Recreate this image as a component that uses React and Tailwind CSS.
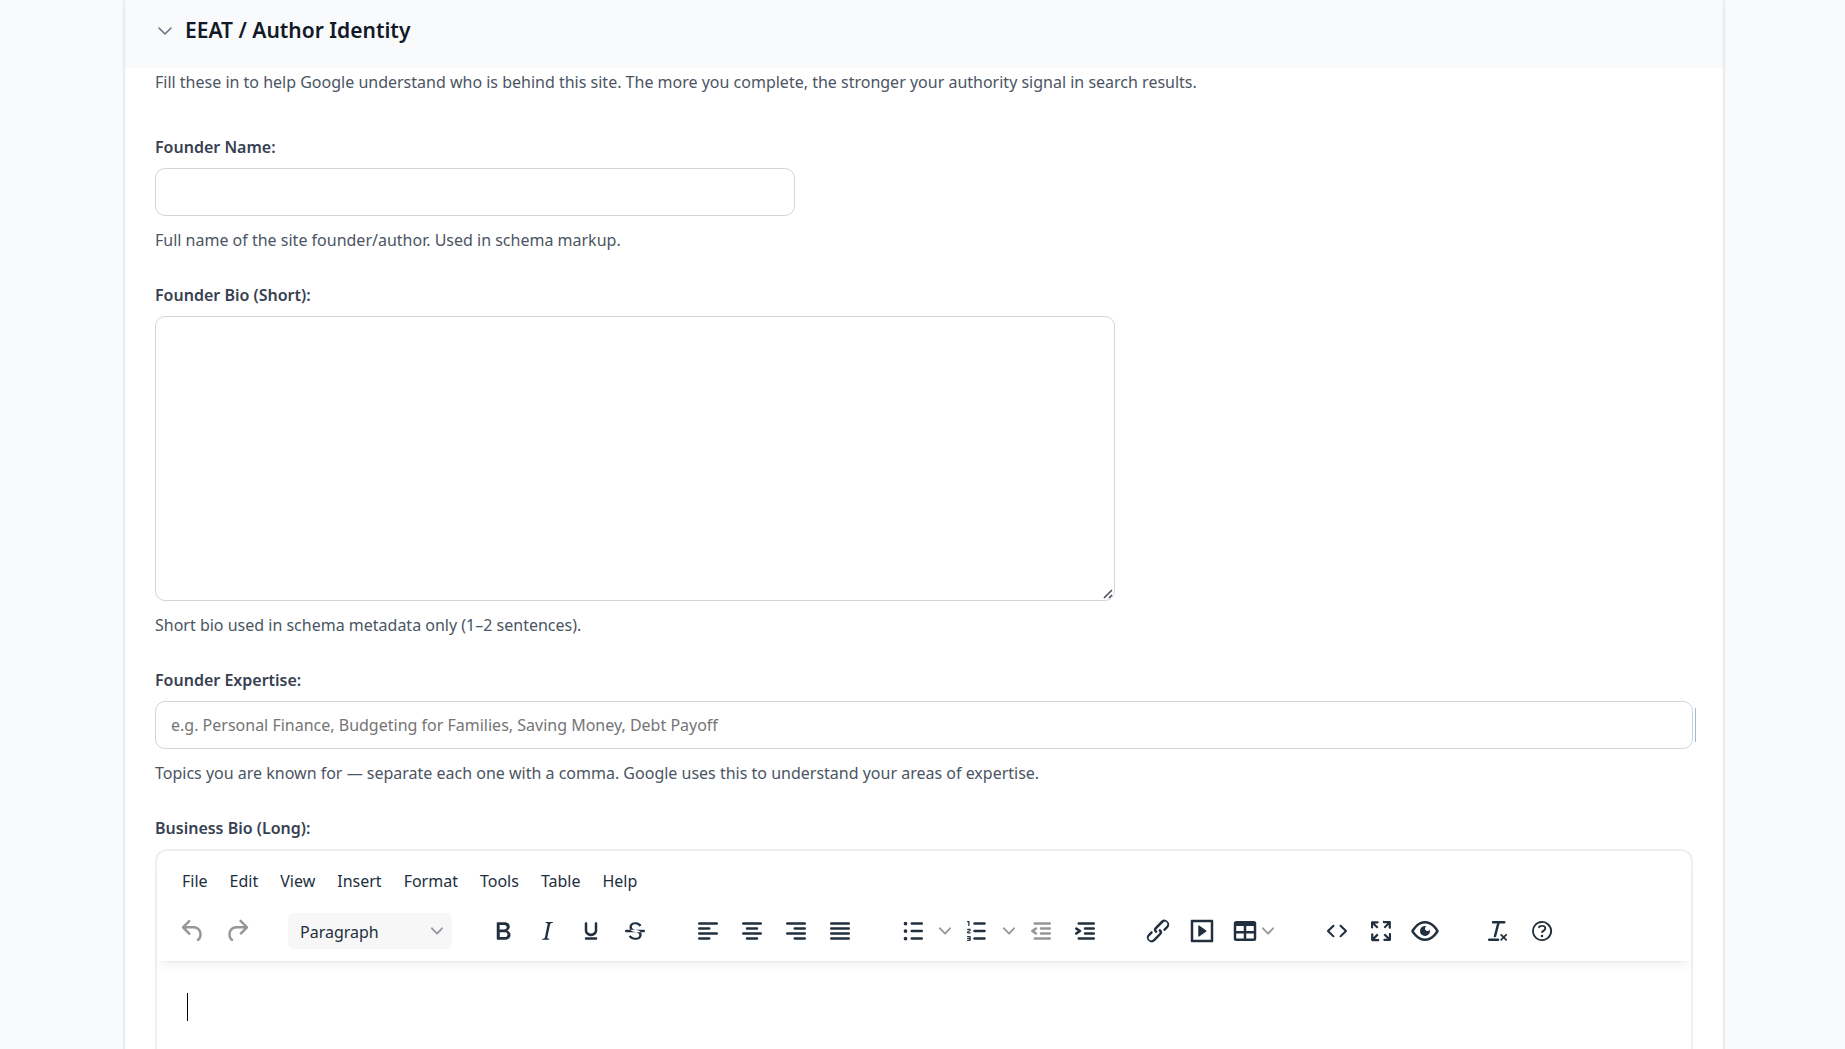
import { useState } from "react";

const icons = {
  undo: "M6.4 8H12c3.7 0 6.2 2 6.8 5.1.6 2.7-.4 5.6-2.3 6.8a1 1 0 01-1-1.8c1.1-.6 1.8-2.7 1.4-4.6-.5-2.1-2.1-3.5-4.9-3.5H6.4l3.3 3.3a1 1 0 11-1.4 1.4l-5-5a1 1 0 010-1.4l5-5a1 1 0 011.4 1.4L6.4 8z",
  redo: "M17.6 10H12c-2.8 0-4.4 1.4-4.9 3.5-.4 2 .3 4 1.4 4.6a1 1 0 11-1 1.8c-2-1.2-2.9-4.1-2.3-6.8.6-3 3-5.1 6.8-5.1h5.6l-3.3-3.3a1 1 0 111.4-1.4l5 5a1 1 0 010 1.4l-5 5a1 1 0 01-1.4-1.4l3.3-3.3z",
  bold: "M7.8 19c-.3 0-.5 0-.6-.2l-.2-.5V5.7c0-.2 0-.4.2-.5l.6-.2h5c1.5 0 2.7.3 3.5 1 .7.6 1.1 1.4 1.1 2.5a3 3 0 01-.6 1.9c-.4.6-1 1-1.6 1.2.4.1.9.3 1.3.6s.8.7 1 1.2c.4.4.5 1 .5 1.6 0 1.3-.4 2.3-1.3 3-.8.7-2.1 1-3.8 1H7.8zm5-8.3c.6 0 1.2-.1 1.6-.5.4-.3.6-.7.6-1.3 0-1.1-.8-1.7-2.3-1.7H9.3v3.5h3.4zm.5 6c.7 0 1.3-.1 1.7-.4.4-.4.6-.9.6-1.5s-.2-1-.7-1.4c-.4-.3-1-.4-2-.4H9.4v3.8h4z",
  italic: "M16.7 4.7l-.1.9h-.3c-.6 0-1 0-1.4.3-.3.3-.4.6-.5 1.1l-2.1 9.8v.6c0 .5.4.8 1.4.8h.2l-.2.8H8l.2-.8h.2c1.1 0 1.8-.5 2-1.5l2-9.8.1-.5c0-.6-.4-.8-1.4-.8h-.3l.2-.9h5.8z",
  underline: "M16 5c.6 0 1 .4 1 1v5.5a4 4 0 01-.4 1.8l-1 1.4a5.3 5.3 0 01-5.5 1 5 5 0 01-1.6-1c-.5-.4-.8-.9-1.1-1.4a4 4 0 01-.4-1.8V6c0-.6.4-1 1-1s1 .4 1 1v5.5c0 .3 0 .6.2 1l.6.7a3.3 3.3 0 002.2.8 3.4 3.4 0 002.2-.8c.3-.2.4-.5.6-.8l.2-.9V6c0-.6.4-1 1-1zM8 17h8c.6 0 1 .4 1 1s-.4 1-1 1H8a1 1 0 010-2z",
  strike: "M15.6 8.5c-.5-.7-1-1.1-1.3-1.3-.6-.4-1.3-.6-2-.6-2.7 0-2.8 1.7-2.8 2.1 0 1.6 1.8 2 3.2 2.3 4.4.9 4.6 2.8 4.6 3.9 0 1.4-.7 4.1-5 4.1A6.2 6.2 0 017 16.4l1.5-1.1c.4.6 1.6 2 3.7 2 1.6 0 2.5-.4 3-1.2.4-.8.3-2-.8-2.6-.7-.4-1.6-.7-2.9-1-1-.2-3.9-.8-3.9-3.6C7.6 6 10.3 5 12.4 5c2.9 0 4.2 1.6 4.7 2.4l-1.5 1.1zM5 11h14a1 1 0 010 2H5a1 1 0 010-2z",
  alignLeft: "M5 5h14a1 1 0 010 2H5a1 1 0 110-2zm0 4h8a1 1 0 010 2H5a1 1 0 110-2zm0 4h14a1 1 0 010 2H5a1 1 0 010-2zm0 4h8a1 1 0 010 2H5a1 1 0 010-2z",
  alignCenter: "M5 5h14a1 1 0 010 2H5a1 1 0 110-2zm3 4h8a1 1 0 010 2H8a1 1 0 110-2zm-3 4h14a1 1 0 010 2H5a1 1 0 010-2zm3 4h8a1 1 0 010 2H8a1 1 0 010-2z",
  alignRight: "M5 5h14a1 1 0 010 2H5a1 1 0 110-2zm6 4h8a1 1 0 010 2h-8a1 1 0 010-2zm-6 4h14a1 1 0 010 2H5a1 1 0 010-2zm6 4h8a1 1 0 010 2h-8a1 1 0 010-2z",
  alignJustify: "M5 5h14a1 1 0 010 2H5a1 1 0 110-2zm0 4h14a1 1 0 010 2H5a1 1 0 110-2zm0 4h14a1 1 0 010 2H5a1 1 0 010-2zm0 4h14a1 1 0 010 2H5a1 1 0 010-2z",
  bullets: "M11 5h8a1 1 0 010 2h-8a1 1 0 010-2zm0 6h8a1 1 0 010 2h-8a1 1 0 010-2zm0 6h8a1 1 0 010 2h-8a1 1 0 010-2zM6 4.5a1.5 1.5 0 110 3 1.5 1.5 0 010-3zm0 6a1.5 1.5 0 110 3 1.5 1.5 0 010-3zm0 6a1.5 1.5 0 110 3 1.5 1.5 0 010-3z",
  numbers: "M10 17h8a1 1 0 010 2h-8a1 1 0 010-2zm0-6h8a1 1 0 010 2h-8a1 1 0 010-2zm0-6h8a1 1 0 010 2h-8a1 1 0 110-2zM6 4v3.5c0 .3-.2.5-.5.5a.5.5 0 01-.5-.5V5h-.5a.5.5 0 010-1H6zm-1 8.8l.2.2h1.3c.3 0 .5.2.5.5s-.2.5-.5.5H4.9a1 1 0 01-.9-1V13c0-.4.3-.8.6-1l1.2-.4.2-.3a.2.2 0 00-.2-.2H4.5a.5.5 0 01-.5-.5c0-.3.2-.5.5-.5h1.6c.5 0 .9.4.9 1v.1c0 .4-.3.8-.6 1l-1.2.4-.2.3zM7 17v2c0 .6-.4 1-1 1H4.5a.5.5 0 010-1h1.2c.2 0 .3-.1.3-.3 0-.2-.1-.3-.3-.3H4.4a.4.4 0 110-.8h1.3c.2 0 .3-.1.3-.3 0-.2-.1-.3-.3-.3H4.5a.5.5 0 110-1H6c.6 0 1 .4 1 1z",
  outdent: "M7 5h12a1 1 0 010 2H7a1 1 0 110-2zm5 4h7a1 1 0 010 2h-7a1 1 0 010-2zm0 4h7a1 1 0 010 2h-7a1 1 0 010-2zm-5 4h12a1 1 0 010 2H7a1 1 0 010-2zm1.6-3.8a1 1 0 01-1.2 1.6l-3-2a1 1 0 010-1.6l3-2a1 1 0 011.2 1.6L6.8 12l1.8 1.2z",
  indent: "M7 5h12a1 1 0 010 2H7a1 1 0 110-2zm5 4h7a1 1 0 010 2h-7a1 1 0 010-2zm0 4h7a1 1 0 010 2h-7a1 1 0 010-2zm-5 4h12a1 1 0 010 2H7a1 1 0 010-2zm-2.6-3.8L6.2 12l-1.8-1.2a1 1 0 011.2-1.6l3 2a1 1 0 010 1.6l-3 2a1 1 0 11-1.2-1.6z",
  link: "M6.2 12.3a1 1 0 011.4 1.4l-2 2a2 2 0 102.6 2.8l4.8-4.8a1 1 0 000-1.4 1 1 0 111.4-1.3 2.9 2.9 0 010 4L9.6 20a3.9 3.9 0 01-5.5-5.5l2-2zm11.6-.6a1 1 0 01-1.4-1.4l2-2a2 2 0 10-2.6-2.8L11 10.3a1 1 0 000 1.4A1 1 0 119.6 13a2.9 2.9 0 010-4L14.4 4a3.9 3.9 0 015.5 5.5l-2 2z",
  media: "M4 3h16c.6 0 1 .4 1 1v16c0 .6-.4 1-1 1H4a1 1 0 01-1-1V4c0-.6.4-1 1-1zm1 2v14h14V5H5zm4.8 2.6l5.6 4a.5.5 0 010 .8l-5.6 4A.5.5 0 019 16V8a.5.5 0 01.8-.4z",
  table: "M19 4a2 2 0 012 2v12a2 2 0 01-2 2H5a2 2 0 01-2-2V6c0-1.1.9-2 2-2h14zM5 14v4h6v-4H5zm14 0h-6v4h6v-4zm0-6h-6v4h6V8zM5 12h6V8H5v4z",
  code: "M9.8 15.7c.3.3.3.8 0 1-.3.4-.9.4-1.2 0l-4.4-4.1a.8.8 0 010-1.2l4.4-4.2c.3-.3.9-.3 1.2 0 .3.3.3.8 0 1.1L6 12l3.8 3.7zM14.2 15.7c-.3.3-.3.8 0 1 .4.4.9.4 1.2 0l4.4-4.1c.3-.3.3-.9 0-1.2l-4.4-4.2a.8.8 0 00-1.2 0c-.3.3-.3.8 0 1.1L18 12l-3.8 3.7z",
  fullscreen: "M15.3 10l-1.2-1.3 2.9-3h-2.3a.9.9 0 110-1.7H19c.5 0 .9.4.9.9v4.4a.9.9 0 11-1.8 0V7l-2.9 3zm0 4l3 3v-2.3a.9.9 0 111.7 0V19c0 .5-.4.9-.9.9h-4.4a.9.9 0 110-1.8H17l-3-2.9 1.3-1.2zM10 15.4l-2.9 3h2.3a.9.9 0 110 1.7H5a.9.9 0 01-.9-.9v-4.4a.9.9 0 111.8 0V17l2.9-3 1.2 1.3zM8.7 10L5.7 7v2.3a.9.9 0 01-1.7 0V5c0-.5.4-.9.9-.9h4.4a.9.9 0 010 1.8H7l3 2.9-1.3 1.2z",
  preview: "M3.5 12.5c.5.8 1.1 1.6 1.8 2.3 2 2 4.2 3.2 6.7 3.2s4.7-1.2 6.7-3.2a16.2 16.2 0 002.1-2.8 15.7 15.7 0 00-2.1-2.8c-2-2-4.2-3.2-6.7-3.2a9.3 9.3 0 00-6.7 3.2A16.2 16.2 0 003.2 12c0 .2.2.3.3.5zm-2.4-1l.7-1.2L4 7.8C6.2 5.4 8.9 4 12 4c3 0 5.8 1.4 8.1 3.8a18.2 18.2 0 012.8 3.7v1l-.7 1.2a18.2 18.2 0 01-2.1 2.5c-2.3 2.4-5 3.8-8.1 3.8-3 0-5.8-1.4-8.1-3.8a18.2 18.2 0 01-2.8-3.7 1 1 0 010-1zm12-3.3a2 2 0 102.7 2.6 4 4 0 11-2.6-2.6z",
  clear: "M13.2 6a1 1 0 010 .2l-2.6 10a1 1 0 01-1 .8h-.2a.8.8 0 01-.8-1l2.6-10H8a1 1 0 110-2h9a1 1 0 010 2h-3.8zM5 18h7a1 1 0 010 2H5a1 1 0 010-2zm13 1.5L16.5 18 15 19.5a.7.7 0 01-1-1l1.5-1.5-1.5-1.5a.7.7 0 011-1l1.5 1.5 1.5-1.5a.7.7 0 011 1L17.5 17l1.5 1.5a.7.7 0 01-1 1z",
  help: "M12 5.5a6.5 6.5 0 00-6 9 6.3 6.3 0 001.4 2l1 1a6.3 6.3 0 003.6 1 6.5 6.5 0 006-9 6.3 6.3 0 00-1.4-2l-1-1a6.3 6.3 0 00-3.6-1zM12 4a7.8 7.8 0 015.7 2.3A8 8 0 1112 4zM9.6 9.7a.7.7 0 01-.7-.8c0-1.1 1.5-1.8 3.2-1.8 1.8 0 3.2.8 3.2 2.4 0 1.4-.4 2.1-1.5 2.8-.2 0-.3.1-.3.2a2 2 0 00-.8.8.8.8 0 01-1.4-.6c.3-.7.8-1 1.3-1.5l.4-.2c.7-.4.8-.6.8-1.5 0-.5-.6-.9-1.7-.9-.5 0-1 .1-1.4.3-.2 0-.3.1-.3.2v-.2c0 .4-.4.8-.8.8zM12 15a1 1 0 110 2 1 1 0 010-2z",
};

const menus = ["File", "Edit", "View", "Insert", "Format", "Tools", "Table", "Help"];

function Icon({ name }) {
  return (
    <svg viewBox="0 0 24 24" className="size-[30px] shrink-0" fill="currentColor" fillRule="evenodd" aria-hidden="true">
      <path d={icons[name]} />
    </svg>
  );
}

function Chevron() {
  return (
    <svg viewBox="0 0 10 10" className="size-3 shrink-0 text-[#949a9f]" fill="currentColor" aria-hidden="true">
      <path d="M8.7 2.2c.3-.3.8-.3 1 0 .4.4.4.9 0 1.2L5.7 7.8c-.3.3-.9.3-1.2 0L.2 3.4a.8.8 0 010-1.2c.3-.3.8-.3 1.1 0L5 6l3.7-3.8z" />
    </svg>
  );
}

function ToolButton({ name, label, disabled }) {
  return (
    <button type="button" aria-label={label} disabled={disabled} className="flex h-9 w-11 items-center justify-center disabled:text-[#949698]">
      <Icon name={name} />
    </button>
  );
}

function SplitButton({ name, label }) {
  return (
    <div className="flex">
      <ToolButton name={name} label={label} />
      <button type="button" aria-label={`${label} options`} className="flex h-9 w-5 items-center justify-center"><Chevron /></button>
    </div>
  );
}

function Field({ id, label, help, children }) {
  return (
    <div className="mb-[31px]">
      <label htmlFor={id} className="mb-[9px] block font-semibold text-[#374151]">{label}</label>
      {children}
      {help && <p className="mt-3 text-[#4b5563]">{help}</p>}
    </div>
  );
}

function Editor({ id, value, onChange }) {
  return (
    <div className="overflow-hidden rounded-xl border-2 border-[#eeeeee] bg-white text-[#222f3e]">
      <div className="mx-px bg-white pb-3 shadow-[0_2px_2px_-2px_rgba(34,47,62,0.1),0_8px_8px_-4px_rgba(34,47,62,0.07)]">
        <div className="flex px-[13px] pt-3">
          {menus.map((m) => (
            <button key={m} type="button" className="h-9 px-[11px]">{m}</button>
          ))}
        </div>
        <div className="flex gap-[29px] px-[13px] pt-[14px]">
          <div className="flex">
            <ToolButton name="undo" label="Undo" disabled />
            <ToolButton name="redo" label="Redo" disabled />
          </div>
          <div className="relative flex items-center">
            <select aria-label="Block format" className="h-9 w-[164px] appearance-none rounded-md bg-[#f7f7f7] pt-0.5 pl-3">
              <option>Paragraph</option>
            </select>
            <span className="pointer-events-none absolute right-[9px]"><Chevron /></span>
          </div>
          <div className="flex">
            <ToolButton name="bold" label="Bold" />
            <ToolButton name="italic" label="Italic" />
            <ToolButton name="underline" label="Underline" />
            <ToolButton name="strike" label="Strikethrough" />
          </div>
          <div className="flex">
            <ToolButton name="alignLeft" label="Align left" />
            <ToolButton name="alignCenter" label="Align center" />
            <ToolButton name="alignRight" label="Align right" />
            <ToolButton name="alignJustify" label="Justify" />
          </div>
          <div className="flex">
            <SplitButton name="bullets" label="Bullet list" />
            <SplitButton name="numbers" label="Numbered list" />
            <ToolButton name="outdent" label="Decrease indent" disabled />
            <ToolButton name="indent" label="Increase indent" />
          </div>
          <div className="flex">
            <ToolButton name="link" label="Insert link" />
            <ToolButton name="media" label="Insert media" />
            <button type="button" aria-label="Table" className="flex h-9 w-[62px] items-center gap-0.5 pl-1.5">
              <Icon name="table" />
              <Chevron />
            </button>
          </div>
          <div className="flex">
            <ToolButton name="code" label="Source code" />
            <ToolButton name="fullscreen" label="Fullscreen" />
            <ToolButton name="preview" label="Preview" />
          </div>
          <div className="flex">
            <ToolButton name="clear" label="Clear formatting" />
            <ToolButton name="help" label="Help" />
          </div>
        </div>
      </div>
      <div className="relative">
        <textarea id={id} value={value} onChange={onChange} className="block h-[400px] w-full resize-none bg-transparent px-[30px] py-8 caret-transparent outline-none" />
        {/* text cursor */}
        <span className="absolute top-8 left-[30px] h-7 w-px bg-black" />
      </div>
    </div>
  );
}

export default function App() {
  const [open, setOpen] = useState(true);
  const [form, setForm] = useState({ name: "", bio: "", expertise: "", longBio: "" });

  const update = (key) => (e) => setForm({ ...form, [key]: e.target.value });

  return (
    <div className="h-screen overflow-y-auto bg-[#f9fafc] pr-[121px] pl-[124px] font-['Noto_Sans',sans-serif] text-base leading-6 [scrollbar-width:none]">
      <main className="min-h-full border-x border-[#e5e7eb] bg-white shadow-sm">
        <h2 className="bg-[#f9fafc] px-8 pt-3 pb-5">
          <button type="button" onClick={() => setOpen(!open)} className="flex items-center gap-3 text-[21px] leading-9 font-semibold text-[#111827]">
            <svg viewBox="0 0 16 16" className="size-4" fill="none" stroke="#6b7280" strokeWidth="1.6" strokeLinecap="round" strokeLinejoin="round" aria-hidden="true">
              <path d="M2 6l6 6 6-6" />
            </svg>
            EEAT / Author Identity
          </button>
        </h2>

        {open && (
          <div className="px-[30px] pt-0.5">
            <p className="mb-[41px] text-[#4b5563]">Fill these in to help Google understand who is behind this site. The more you complete, the stronger your authority signal in search results.</p>

            <Field id="founder-name" label="Founder Name:" help="Full name of the site founder/author. Used in schema markup.">
              <input id="founder-name" type="text" value={form.name} onChange={update("name")} className="block h-12 w-full max-w-[640px] rounded-[10px] border border-[#d1d5db] px-[15px]" />
            </Field>

            <Field id="founder-bio" label="Founder Bio (Short):" help="Short bio used in schema metadata only (1–2 sentences).">
              <div className="relative max-w-[960px]">
                <textarea id="founder-bio" value={form.bio} onChange={update("bio")} className="block h-[285px] w-full resize-none rounded-[10px] border border-[#d1d5db] px-[15px] py-3" />
                {/* resize grip */}
                <svg viewBox="0 0 10 10" className="pointer-events-none absolute right-0.5 bottom-0.5 size-2.5" fill="none" stroke="#4b4f56" strokeWidth="1.6" aria-hidden="true">
                  <path d="M1 9l8-8M6 9l3-3" />
                </svg>
              </div>
            </Field>

            <Field id="founder-expertise" label="Founder Expertise:" help="Topics you are known for — separate each one with a comma. Google uses this to understand your areas of expertise.">
              <div className="relative">
                <input id="founder-expertise" type="text" value={form.expertise} onChange={update("expertise")} placeholder="e.g. Personal Finance, Budgeting for Families, Saving Money, Debt Payoff" className="block h-12 w-full rounded-[10px] border border-[#d1d5db] px-[15px] placeholder:text-[#757575]" />
                <span className="absolute inset-y-[7px] -right-[3px] w-px bg-[#9dbbd6]" />
              </div>
            </Field>

            <Field id="business-bio" label="Business Bio (Long):">
              <Editor id="business-bio" value={form.longBio} onChange={update("longBio")} />
            </Field>
          </div>
        )}
      </main>
    </div>
  );
}
